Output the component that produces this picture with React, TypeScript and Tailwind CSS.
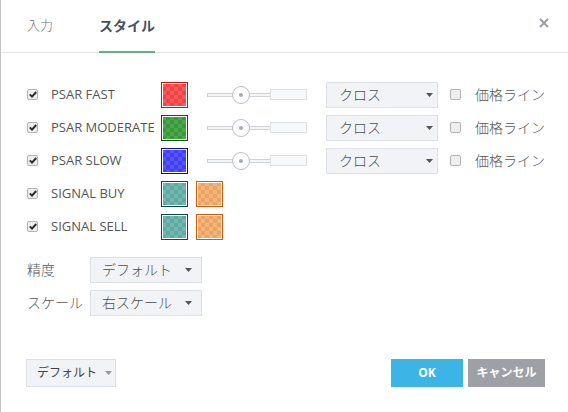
import React from "react"

type Plot = {
  name: string
  swatches: string[]
  slider: boolean
}

// full class strings for each swatch colour (border + checker fill)
const swatchClass: Record<string, string> = {
  red: "border-[#cc1111] bg-[repeating-conic-gradient(#f04444_0_25%,#f75a5a_0_50%)]",
  green: "border-[#0b560b] bg-[repeating-conic-gradient(#3a983a_0_25%,#4aa84a_0_50%)]",
  blue: "border-[#0a0ab0] bg-[repeating-conic-gradient(#4040f0_0_25%,#5555fa_0_50%)]",
  teal: "border-[#0e4a44] bg-[repeating-conic-gradient(#5fa9a2_0_25%,#72b8b1_0_50%)]",
  orange: "border-[#d05a10] bg-[repeating-conic-gradient(#eca262_0_25%,#f4b57a_0_50%)]",
}

const plots: Plot[] = [
  { name: "PSAR FAST", swatches: ["red"], slider: true },
  { name: "PSAR MODERATE", swatches: ["green"], slider: true },
  { name: "PSAR SLOW", swatches: ["blue"], slider: true },
  { name: "SIGNAL BUY", swatches: ["teal", "orange"], slider: false },
  { name: "SIGNAL SELL", swatches: ["teal", "orange"], slider: false },
]

const Checkbox = ({ checked }: { checked?: boolean }) => (
  <span className="flex h-[11px] w-[11px] shrink-0 items-center justify-center rounded-[2px] border border-[#b3b3b3] bg-[#eeeeee]">
    {checked && (
      <svg width="8" height="7" viewBox="0 0 8 7">
        <path d="M0.8 3.4 L3 5.6 L7.2 1" fill="none" stroke="#2b2b2b" strokeWidth="2" />
      </svg>
    )}
  </span>
)

const Caret = ({ color = "#555" }: { color?: string }) => (
  <svg width="7" height="4" viewBox="0 0 7 4">
    <path d="M0 0 H7 L3.5 4 Z" fill={color} />
  </svg>
)

const Select = ({ value, className }: { value: string; className: string }) => (
  <div
    className={`flex h-[26px] w-[112px] shrink-0 items-center justify-between border border-[#dcdfe5] bg-[#f1f3f6] text-[14px] font-light text-[#4f4f4f] ${className}`}
  >
    <span>{value}</span>
    <Caret />
  </div>
)

const Swatch = ({ color }: { color: string }) => (
  <div className={`h-[26px] w-[27px] shrink-0 border p-px bg-clip-content bg-size-[8px_8px] ${swatchClass[color]}`}>
    <div className="h-full w-full" />
  </div>
)

const Slider = () => (
  <div className="relative ml-[19px] flex h-[18px] w-[100px] shrink-0 items-center">
    <div className="h-[4px] w-[64px] border border-[#cfd2d7] bg-[#f4f5f6]" />
    <div className="-ml-px h-[11px] w-[37px] border border-[#dcdfe3] bg-[#f7f8f9]" />
    <div className="absolute left-[25px] top-0 flex h-[18px] w-[18px] items-center justify-center rounded-full border border-[#b9bec7] bg-white">
      <div className="h-[4px] w-[4px] rounded-full bg-[#a9aeb6]" />
    </div>
  </div>
)

export default function App() {
  return (
    <div className="flex h-[412px] w-[568px] flex-col border-l border-[#c2c2c2] bg-white font-['Open_Sans','Noto_Sans_CJK_JP',sans-serif] text-[#555]">
      <div className="flex h-[53px] shrink-0 items-start border-b border-[#e1e4e9] pl-[26px] pr-[19px]">
        <div className="-mb-px flex h-[53px] items-center border-b-2 border-transparent text-[13px] font-light text-[#6b7079]">
          入力
        </div>
        <div className="-mb-px ml-[46px] flex h-[53px] items-center border-b-2 border-[#5cb386] text-[14px] font-bold text-[#4a5060]">
          スタイル
        </div>
        <div className="ml-auto flex h-[46px] items-center">
          <svg width="10" height="10" viewBox="0 0 10 10">
            <path d="M1 1 L9 9 M9 1 L1 9" stroke="#9aa0a8" strokeWidth="2" />
          </svg>
        </div>
      </div>

      <div className="flex flex-col pl-[26px] pt-[25px]">
        {plots.map((p) => (
          <div key={p.name} className="flex h-[33px] items-center">
            <Checkbox checked />
            <span className="ml-[13px] w-[110px] shrink-0 text-[13px]">{p.name}</span>
            <Swatch color={p.swatches[0]} />
            {p.slider ? (
              <>
                <Slider />
                <Select value="クロス" className="ml-[19px] pl-[12px] pr-[4px]" />
                <span className="ml-[12px]">
                  <Checkbox />
                </span>
                <span className="ml-[14px] text-[14px] font-light">価格ライン</span>
              </>
            ) : (
              <div className="ml-[8px]">
                <Swatch color={p.swatches[1]} />
              </div>
            )}
          </div>
        ))}

        <div className="mt-[10px] flex h-[33px] items-center">
          <span className="w-[63px] text-[14px] font-light">精度</span>
          <Select value="デフォルト" className="pl-[11px] pr-[9px]" />
        </div>
        <div className="flex h-[33px] items-center">
          <span className="w-[63px] text-[14px] font-light">スケール</span>
          <Select value="右スケール" className="pl-[11px] pr-[9px]" />
        </div>
      </div>

      <div className="mt-auto flex items-center justify-between pb-[25px] pl-[25px] pr-[23px]">
        <div className="flex h-[28px] w-[90px] items-center gap-[8px] border border-[#dcdfe5] bg-[#f1f3f6] pl-[10px] text-[12px] text-[#444]">
          <span>デフォルト</span>
          <Caret color="#999" />
        </div>
        <div className="flex gap-[5px]">
          <button className="h-[28px] w-[72px] bg-[#3cb4e5] text-[12px] font-bold text-white">OK</button>
          <button className="h-[28px] w-[77px] bg-[#9ea0a6] text-[12px] font-bold text-white">キャンセル</button>
        </div>
      </div>
    </div>
  )
}
